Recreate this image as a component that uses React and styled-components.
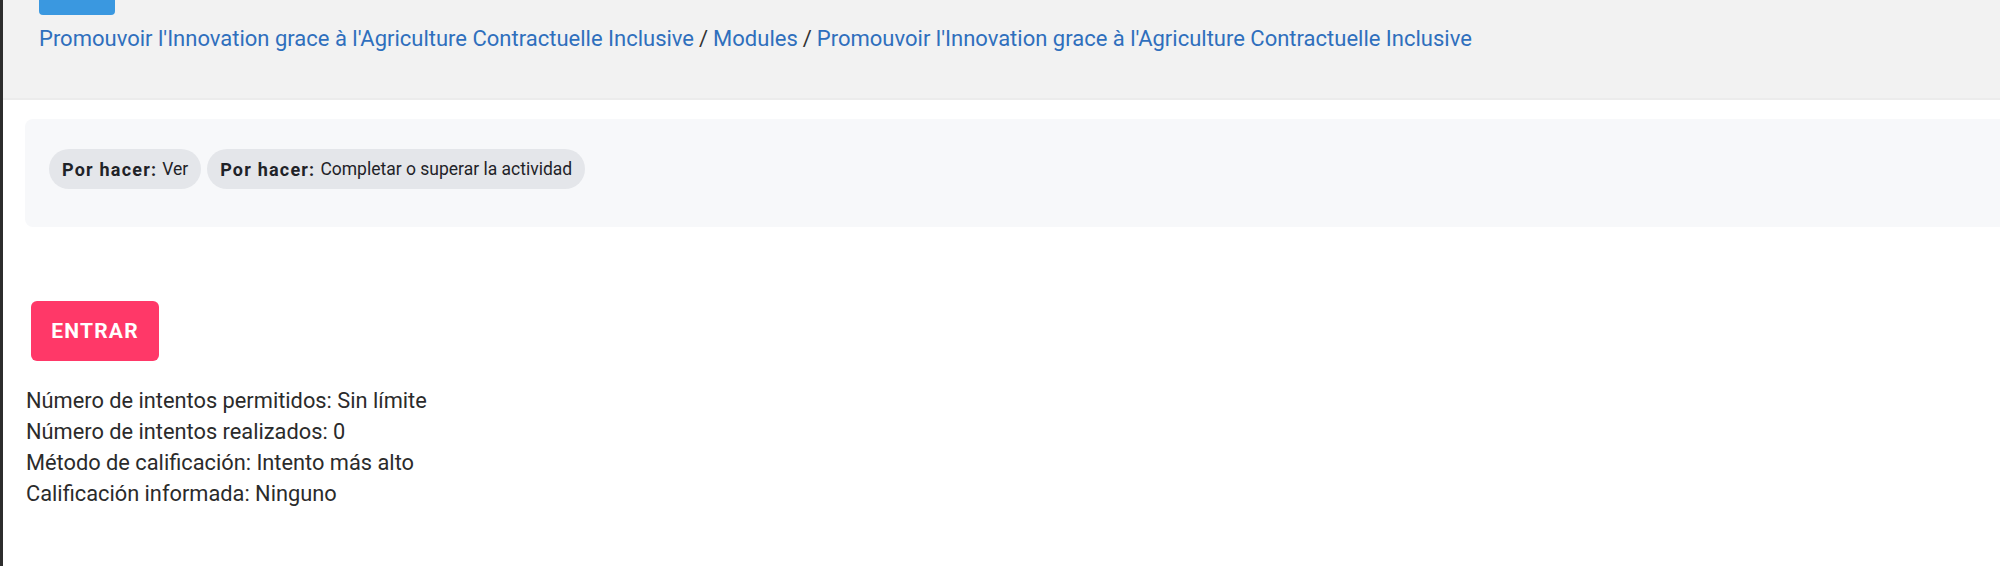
import React from "react";
import styled, { createGlobalStyle } from "styled-components";

const GlobalStyle = createGlobalStyle`
  html, body {
    margin: 0;
    padding: 0;
    background: #ffffff;
    overflow: hidden;
  }
  body {
    font-family: "Roboto", "Liberation Sans", sans-serif;
    color: #2b2b2b;
  }
`;

const Page = styled.div`
  min-height: 566px;
  border-left: 3px solid #2d2d2d;
  box-sizing: border-box;
`;

const Header = styled.header`
  height: 100px;
  background: #f2f2f2;
  box-shadow: inset 0 -2px 0 #ececec;
  padding-left: 36px;
  box-sizing: border-box;
  overflow: hidden;
`;

const TopButton = styled.div`
  width: 76px;
  height: 40px;
  margin-top: -25px;
  background: #3a98e0;
  border-radius: 4px;
`;

const Breadcrumb = styled.nav`
  margin-top: 11px;
  font-size: 22px;
  line-height: 26px;
  color: #333333;
  white-space: nowrap;
`;

const Crumb = styled.a`
  color: #2f6fbd;
  text-decoration: none;
`;

const Sep = styled.span`
  margin: 0 5px;
`;

const Main = styled.main`
  padding: 19px 0 0 22px;
`;

const Panel = styled.section`
  display: flex;
  gap: 6px;
  align-items: center;
  background: #f7f8fa;
  border-radius: 8px 0 0 8px;
  padding: 30px 24px 38px;
  height: 108px;
  box-sizing: border-box;
`;

const Chip = styled.span`
  display: inline-flex;
  align-items: center;
  height: 40px;
  padding: 0 13px;
  border-radius: 20px;
  background: #e4e6ea;
  font-size: 17.5px;
  color: #1f2328;
  white-space: nowrap;
  b {
    font-size: 18px;
    font-weight: 700;
    letter-spacing: 1.2px;
    margin-right: 5px;
  }
`;

const EnterButton = styled.button`
  margin: 74px 0 0 6px;
  width: 128px;
  height: 60px;
  border: none;
  border-radius: 6px;
  background: #ff3868;
  color: #ffffff;
  font-family: "Roboto", "Liberation Sans", sans-serif;
  font-weight: 700;
  font-size: 21px;
  letter-spacing: 1.2px;
  cursor: pointer;
`;

const Info = styled.div`
  margin-top: 24px;
  margin-left: 1px;
  font-size: 21.8px;
  line-height: 31px;
  color: #2b2b2b;
`;

const Line = styled.div``;

const title = "Promouvoir l'Innovation grace à l'Agriculture Contractuelle Inclusive";

const App = () => {
  return (
    <Page>
      <GlobalStyle />
      <Header>
        <TopButton />
        <Breadcrumb>
          <Crumb href="#">{title}</Crumb>
          <Sep>/</Sep>
          <Crumb href="#">Modules</Crumb>
          <Sep>/</Sep>
          <Crumb href="#">{title}</Crumb>
        </Breadcrumb>
      </Header>
      <Main>
        <Panel>
          <Chip>
            <b>Por hacer:</b> Ver
          </Chip>
          <Chip>
            <b>Por hacer:</b> Completar o superar la actividad
          </Chip>
        </Panel>
        <EnterButton>ENTRAR</EnterButton>
        <Info>
          <Line>Número de intentos permitidos: Sin límite</Line>
          <Line>Número de intentos realizados: 0</Line>
          <Line>Método de calificación: Intento más alto</Line>
          <Line>Calificación informada: Ninguno</Line>
        </Info>
      </Main>
    </Page>
  );
};

export default App;
